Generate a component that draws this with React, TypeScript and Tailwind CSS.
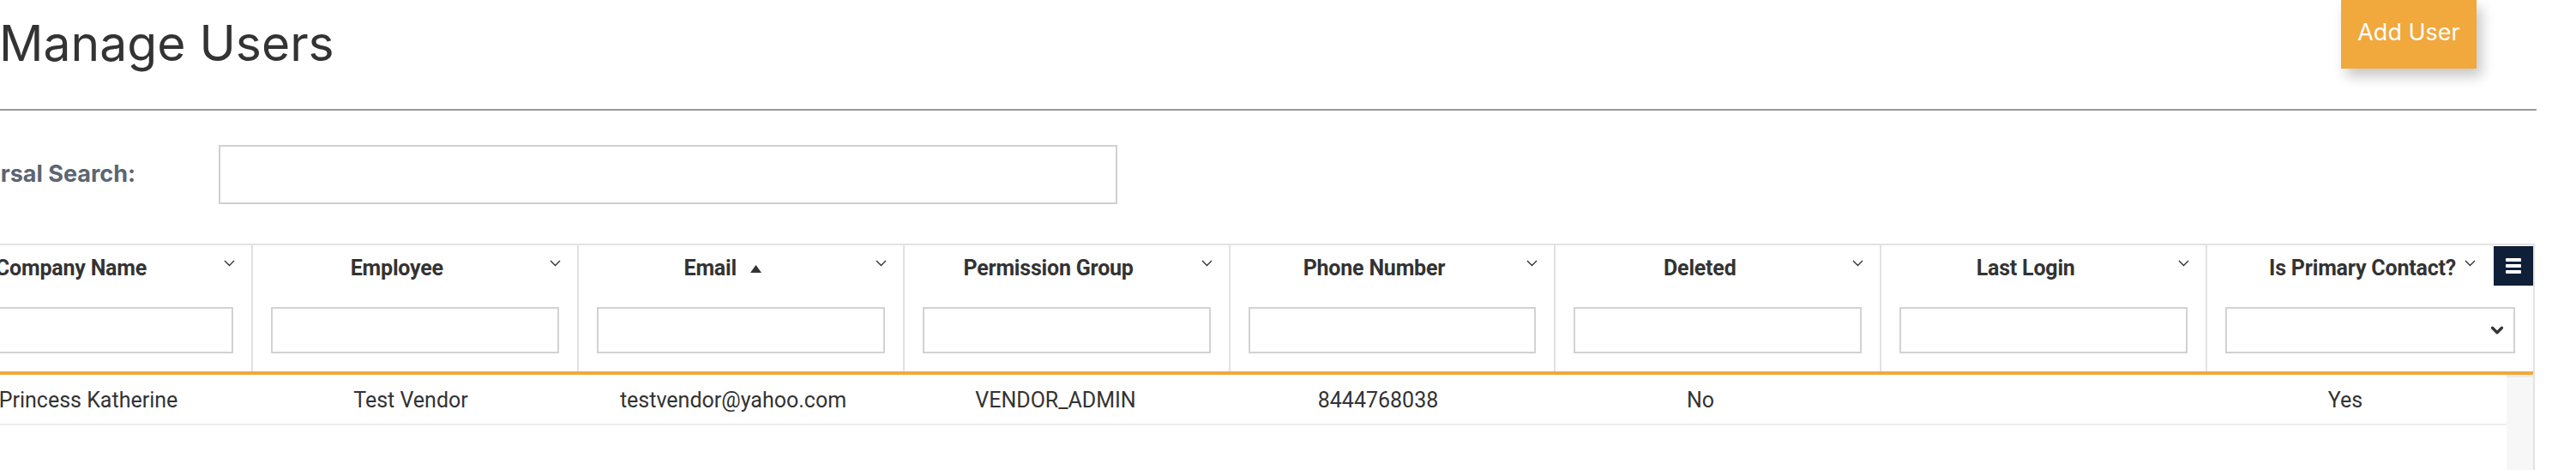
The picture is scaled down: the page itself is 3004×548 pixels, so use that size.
import { ChevronDown } from "lucide-react"

type Column = {
  title: string
  value: string
  sorted?: boolean
  select?: boolean
}

const columns: Column[] = [
  { title: "Company Name", value: "Princess Katherine" },
  { title: "Employee", value: "Test Vendor" },
  { title: "Email", value: "testvendor@yahoo.com", sorted: true },
  { title: "Permission Group", value: "VENDOR_ADMIN" },
  { title: "Phone Number", value: "8444768038" },
  { title: "Deleted", value: "No" },
  { title: "Last Login", value: "" },
  { title: "Is Primary Contact?", value: "Yes", select: true },
]

function MenuChevron() {
  return (
    <svg width="13" height="8" viewBox="0 0 13 8" fill="none" className="mb-[12px] text-[#333]">
      <path d="M1 1l5.5 5.5L12 1" stroke="currentColor" strokeWidth="1.4" />
    </svg>
  )
}

function SortArrow() {
  return (
    <svg width="13" height="9" viewBox="0 0 13 9" className="ml-[16px] text-[#333]">
      <path d="M6.5 0L13 9H0z" fill="currentColor" />
    </svg>
  )
}

function HeaderCell({ col, last }: { col: Column; last: boolean }) {
  return (
    <div className={`flex h-[147px] flex-col ${last ? "" : "border-r-2 border-[#e2e2e2]"}`}>
      {/* 見出し + メニュー */}
      <div className={`flex h-[48px] items-center pt-[6px] ${last ? "pr-[48px]" : ""}`}>
        <div className={`flex flex-1 items-center ${last ? "justify-end" : "justify-center"}`}>
          <span className="whitespace-nowrap font-['Roboto',sans-serif] text-[25px] font-bold tracking-[-0.2px] text-[#333]">
            {col.title}
          </span>
          {col.sorted && <SortArrow />}
        </div>
        <div className="flex w-[42px] justify-start pl-[10px]">
          <MenuChevron />
        </div>
      </div>

      {/* フィルター */}
      <div className="mt-[24px] px-[21px]">
        {col.select ? (
          <div className="flex h-[54px] w-full items-center justify-end border-2 border-[#d2d2d2] bg-white pr-[8px]">
            <ChevronDown size={22} strokeWidth={3.5} className="text-[#333]" />
          </div>
        ) : (
          <input className="block h-[54px] w-full border-2 border-[#d2d2d2] bg-white outline-none" />
        )}
      </div>
    </div>
  )
}

export default function App() {
  return (
    <div className="h-[548px] w-[3004px] overflow-hidden bg-white font-['Inter',sans-serif] text-[#333]">
      <div className="ml-[-85px] w-[3043px]">
        {/* タイトル行 */}
        <div className="flex h-[129px] items-start justify-between border-b-2 border-[#999]">
          <h1 className="pl-[84px] pt-[16px] text-[57px] font-normal leading-[70px] text-[#333]">Manage Users</h1>
          <button className="mr-[70px] flex h-[80px] w-[158px] items-center justify-center bg-[#f1a83d] pb-[4px] text-[27px] text-white shadow-[6px_9px_14px_rgba(0,0,0,0.22)]">
            Add User
          </button>
        </div>

        {/* 全体検索 */}
        <div className="flex items-center pt-[40px]">
          <div className="flex w-[243px] shrink-0 justify-end">
            <span className="whitespace-nowrap text-[27px] font-bold text-[#5b6573]">Universal Search:</span>
          </div>
          <input className="ml-[97px] block h-[69px] w-[1048px] border-2 border-[#d0d0d0] bg-white outline-none" />
        </div>

        {/* グリッド */}
        <div className="relative mt-[46px] w-[3041px] border-r-2 border-t-2 border-[#e2e2e2]">
          <div className="grid grid-cols-8">
            {columns.map((c, i) => (
              <HeaderCell key={c.title} col={c} last={i === columns.length - 1} />
            ))}
          </div>
          <div className="h-[4px] bg-[#f1a83d]" />
          <div className="flex h-[120px]">
            <div className="grid flex-1 grid-cols-8 self-start border-b-2 border-[#eeeeee]">
              {columns.map((c) => (
                <div
                  key={c.title}
                  className="flex h-[57px] items-center justify-center whitespace-nowrap pt-[2px] font-['Roboto',sans-serif] text-[25px] text-[#333]"
                >
                  {c.value}
                </div>
              ))}
            </div>
            <div className="w-[31px] border-t-[3px] border-[#ececec] bg-[#f7f7f7]" />
          </div>

          <button className="absolute right-0 top-[1px] flex h-[46px] w-[46px] flex-col items-center justify-center gap-[3px] bg-[#0f1f38]">
            <span className="h-[4px] w-[18px] rounded-[1px] bg-white" />
            <span className="h-[4px] w-[18px] rounded-[1px] bg-white" />
            <span className="h-[4px] w-[18px] rounded-[1px] bg-white" />
          </button>
        </div>
      </div>
    </div>
  )
}
